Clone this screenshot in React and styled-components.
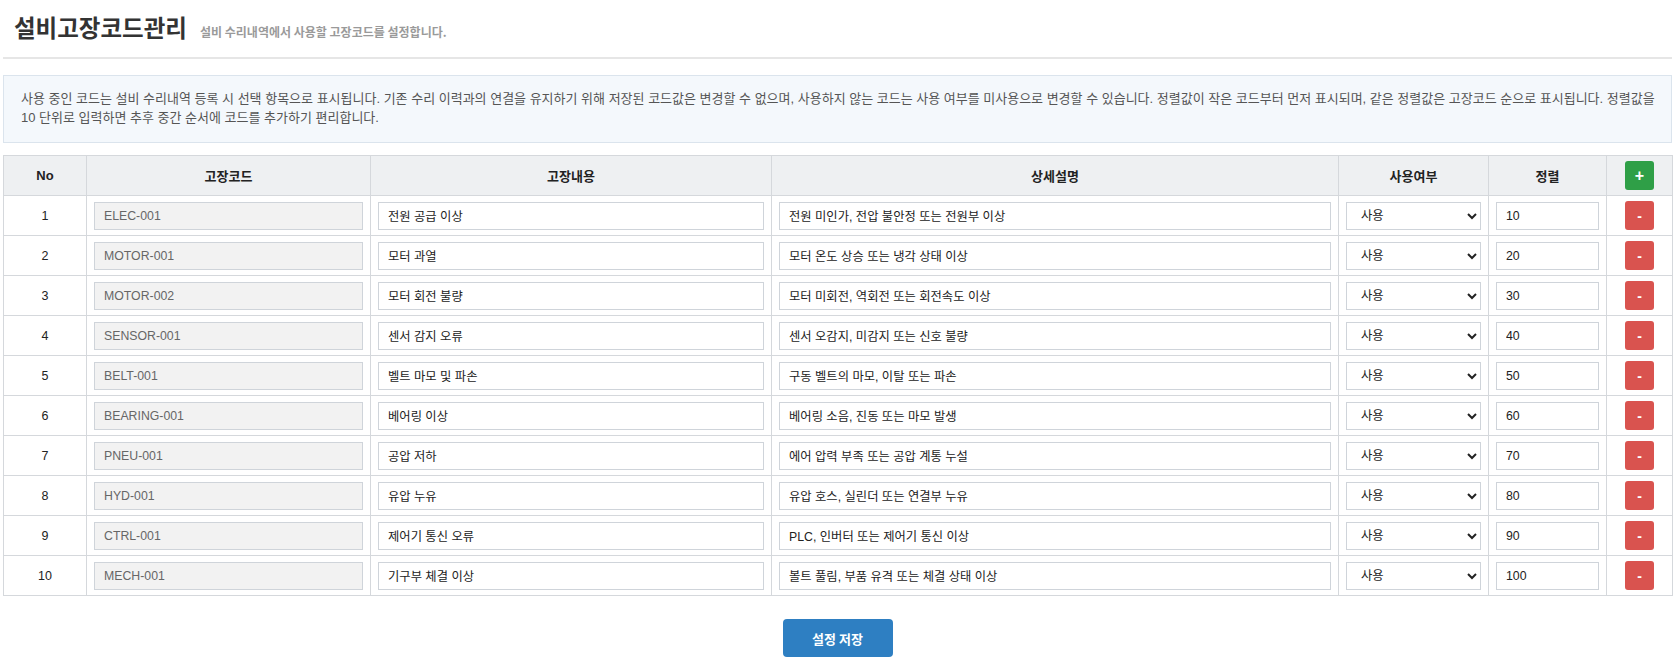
import React from "react";
import styled, { createGlobalStyle } from "styled-components";

const GlobalStyle = createGlobalStyle`
  html, body { margin: 0; padding: 0; background: #fff; }
  body {
    font-family: "Liberation Sans", "Noto Sans CJK KR", sans-serif;
    color: #222;
  }
  * { box-sizing: border-box; }
`;

const Page = styled.div`
  padding: 0 2px 0 3px;
`;

const Header = styled.div`
  display: flex;
  align-items: baseline;
  padding: 12px 11px 15px;
  border-bottom: 2px solid #e6e6e6;
`;

const Title = styled.h1`
  margin: 0;
  font-family: "Noto Sans CJK KR", sans-serif;
  font-size: 23.5px;
  line-height: 30px;
  font-weight: 700;
  color: #333;
`;

const Subtitle = styled.span`
  margin-left: 13px;
  font-family: "Noto Sans CJK KR", sans-serif;
  font-size: 12px;
  font-weight: 700;
  color: #9a9a9a;
`;

const InfoBox = styled.div`
  margin-top: 16px;
  padding: 13px 8px 15px 17px;
  background: #f4f8fc;
  border: 1px solid #dbe4ed;
  font-size: 13px;
  line-height: 19px;
  color: #555;
`;

const Table = styled.table`
  width: 100%;
  margin-top: 12px;
  border-collapse: collapse;
  table-layout: fixed;
  border: 1px solid #d5d8dc;
`;

const HeadCell = styled.th`
  height: 40px;
  padding: 0 7px;
  background: #eef0f2;
  border: 1px solid #d5d8dc;
  font-size: 13px;
  font-weight: 700;
  color: #222;
  text-align: center;
  vertical-align: middle;
`;

const Cell = styled.td`
  height: 40px;
  padding: 0 7px;
  border: 1px solid #d5d8dc;
  font-size: 12.5px;
  color: #222;
  text-align: ${(p) => (p.$center ? "center" : "left")};
  vertical-align: middle;
`;

const TextInput = styled.input`
  display: block;
  width: 100%;
  height: 28px;
  padding: 0 9px;
  border: 1px solid #cfd4da;
  border-radius: 0;
  outline: none;
  font-family: "Liberation Sans", "Noto Sans CJK KR", sans-serif;
  font-size: 12.3px;
  color: ${(p) => (p.$locked ? "#666" : "#222")};
  background: ${(p) => (p.$locked ? "#f2f2f2" : "#fff")};
`;

const Select = styled.select`
  display: block;
  width: 100%;
  height: 28px;
  padding: 0 6px 0 10px;
  border: 1px solid #cfd4da;
  border-radius: 0;
  background: #fff;
  font-family: "Liberation Sans", "Noto Sans CJK KR", sans-serif;
  font-size: 12.3px;
  color: #222;
  outline: none;
`;

const IconButton = styled.button`
  display: inline-flex;
  align-items: center;
  justify-content: center;
  width: 29px;
  height: 29px;
  padding: 0;
  border: none;
  border-radius: 3px;
  background: ${(p) => (p.$variant === "add" ? "#2f9f47" : "#d9534f")};
  color: #fff;
  font-family: "Liberation Sans", sans-serif;
  font-size: ${(p) => (p.$variant === "add" ? "16px" : "14px")};
  font-weight: 700;
  line-height: 1;
  cursor: pointer;
  vertical-align: middle;
`;

const Footer = styled.div`
  display: flex;
  justify-content: center;
  padding-top: 23px;
`;

const SaveButton = styled.button`
  width: 110px;
  height: 38px;
  border: none;
  border-radius: 4px;
  background: #2e7fc2;
  color: #fff;
  font-family: "Noto Sans CJK KR", sans-serif;
  font-size: 13px;
  font-weight: 700;
  cursor: pointer;
`;

const rows = [
  ["ELEC-001", "전원 공급 이상", "전원 미인가, 전압 불안정 또는 전원부 이상", 10],
  ["MOTOR-001", "모터 과열", "모터 온도 상승 또는 냉각 상태 이상", 20],
  ["MOTOR-002", "모터 회전 불량", "모터 미회전, 역회전 또는 회전속도 이상", 30],
  ["SENSOR-001", "센서 감지 오류", "센서 오감지, 미감지 또는 신호 불량", 40],
  ["BELT-001", "벨트 마모 및 파손", "구동 벨트의 마모, 이탈 또는 파손", 50],
  ["BEARING-001", "베어링 이상", "베어링 소음, 진동 또는 마모 발생", 60],
  ["PNEU-001", "공압 저하", "에어 압력 부족 또는 공압 계통 누설", 70],
  ["HYD-001", "유압 누유", "유압 호스, 실린더 또는 연결부 누유", 80],
  ["CTRL-001", "제어기 통신 오류", "PLC, 인버터 또는 제어기 통신 이상", 90],
  ["MECH-001", "기구부 체결 이상", "볼트 풀림, 부품 유격 또는 체결 상태 이상", 100],
];

const colWidths = [83, 284, 401, 567, 150, 118, 66];

export default function App() {
  return (
    <Page>
      <GlobalStyle />
      <Header>
        <Title>설비고장코드관리</Title>
        <Subtitle>설비 수리내역에서 사용할 고장코드를 설정합니다.</Subtitle>
      </Header>
      <InfoBox>
        사용 중인 코드는 설비 수리내역 등록 시 선택 항목으로 표시됩니다. 기존 수리 이력과의 연결을 유지하기 위해 저장된 코드값은 변경할 수 없으며, 사용하지 않는 코드는 사용 여부를 미사용으로 변경할 수 있습니다. 정렬값이 작은 코드부터 먼저 표시되며, 같은 정렬값은 고장코드 순으로 표시됩니다. 정렬값을 10 단위로 입력하면 추후 중간 순서에 코드를 추가하기 편리합니다.
      </InfoBox>
      <Table>
        <colgroup>
          {colWidths.map((w, i) => (
            <col key={i} style={{ width: w }} />
          ))}
        </colgroup>
        <thead>
          <tr>
            <HeadCell>No</HeadCell>
            <HeadCell>고장코드</HeadCell>
            <HeadCell>고장내용</HeadCell>
            <HeadCell>상세설명</HeadCell>
            <HeadCell>사용여부</HeadCell>
            <HeadCell>정렬</HeadCell>
            <HeadCell>
              <IconButton $variant="add">+</IconButton>
            </HeadCell>
          </tr>
        </thead>
        <tbody>
          {rows.map(([code, name, desc, sort], i) => (
            <tr key={code}>
              <Cell $center>{i + 1}</Cell>
              <Cell>
                <TextInput $locked readOnly defaultValue={code} />
              </Cell>
              <Cell>
                <TextInput defaultValue={name} />
              </Cell>
              <Cell>
                <TextInput defaultValue={desc} />
              </Cell>
              <Cell>
                <Select defaultValue="Y">
                  <option value="Y">사용</option>
                  <option value="N">미사용</option>
                </Select>
              </Cell>
              <Cell>
                <TextInput defaultValue={sort} />
              </Cell>
              <Cell $center>
                <IconButton $variant="del">-</IconButton>
              </Cell>
            </tr>
          ))}
        </tbody>
      </Table>
      <Footer>
        <SaveButton>설정 저장</SaveButton>
      </Footer>
    </Page>
  );
}
